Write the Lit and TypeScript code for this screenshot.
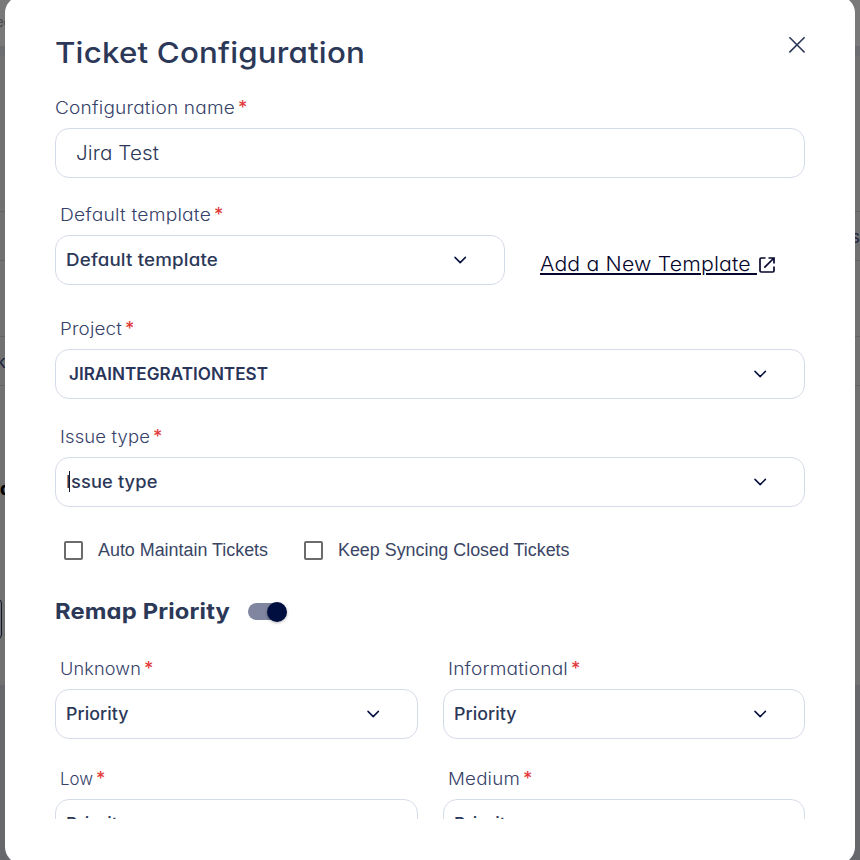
import { LitElement, html, css } from "lit";
import { customElement, property } from "lit/decorators.js";

/** A run of text widened to fill a given width, partly by stretch and partly by tracking. */
@customElement("tracked-text")
class TrackedText extends LitElement {
  @property() text = "";
  @property({ type: Number }) width = 0;

  static styles = css`
    :host { display: inline-block; white-space: pre; }
    .run { display: inline-block; transform-origin: 0 50%; }
    :host([underlined]) .run {
      text-decoration: underline; text-decoration-thickness: 2px; text-underline-offset: 2px;
    }
  `;

  render() {
    return html`<span class="run">${this.text}</span>`;
  }

  updated() {
    const run = this.renderRoot.querySelector(".run") as HTMLElement;
    run.style.letterSpacing = "0px";
    run.style.transform = "none";
    const natural = run.getBoundingClientRect().width;
    const stretch = 1 + 0.85 * (this.width / natural - 1);
    const step = (this.width / stretch - natural) / this.text.length;
    run.style.letterSpacing = `${step.toFixed(3)}px`;
    run.style.transform = `scaleX(${stretch.toFixed(4)})`;
    this.style.width = `${this.width}px`;
  }
}

@customElement("select-field")
class SelectField extends LitElement {
  @property() label = "";
  @property({ type: Number }) labelWidth = 0;
  @property() value = "";
  @property({ type: Number }) valueWidth = 0;
  @property({ type: Boolean }) strong = false;
  @property({ type: Boolean }) caret = false;

  static styles = css`
    :host { display: block; min-width: 0; }
    .label { display: flex; height: 27px; line-height: 28px; padding-left: 4.5px; font-size: 17px; font-weight: 350; color: #36426a; }
    .star { color: #e23b3b; font-weight: 500; font-size: 18px; margin-left: 3.5px; line-height: 28px; }
    .box {
      box-sizing: border-box; height: 50px; margin-top: 7px; border: 1px solid #d6dbe9; border-radius: 14px;
      display: flex; align-items: center; justify-content: space-between; padding: 0 37px 0 10px;
      font-size: 17px; font-weight: 450; color: #2c3858; background: #fff;
    }
    .strong { font-weight: 600; padding-left: 12.5px; color: #28345a; }
    .value { position: relative; line-height: 24px; }
    .caret { position: absolute; left: 3px; top: 1px; width: 1px; height: 21px; background: #111a38; }
    svg { display: block; }
  `;

  render() {
    return html`
      <div class="label"><tracked-text .text=${this.label} .width=${this.labelWidth}></tracked-text><span class="star">*</span></div>
      <div class="box ${this.strong ? "strong" : ""}">
        <span class="value"><tracked-text .text=${this.value} .width=${this.valueWidth}></tracked-text>${this.caret ? html`<i class="caret"></i>` : ""}</span>
        <svg width="14" height="10" viewBox="0 0 14 10" fill="none" stroke="#06103f" stroke-width="1.5" stroke-linecap="round" stroke-linejoin="round"><path d="M2 2.4 7.2 7.6l5.2-5.2" /></svg>
      </div>`;
  }
}

@customElement("app-root")
class AppRoot extends LitElement {
  static styles = css`
    :host {
      display: block; position: relative; width: 860px; height: 860px; overflow: hidden; background: #66686b;
      font-family: Inter, "Open Sans", sans-serif; font-feature-settings: "cv11"; color: #2c3858;
    }
    .page { display: flex; flex-direction: column; height: 860px; }
    .top { height: 46px; background: #797979; }
    .band { height: 10px; background: #6c6d70; }
    .sheet { height: 629px; background: #717171; }
    .line { position: absolute; left: 0; width: 860px; height: 1px; background: #626366; }
    .l1 { top: 211px; } .l2 { top: 260px; } .l3 { top: 336px; } .l4 { top: 385px; }
    .peek { position: absolute; font-size: 15px; line-height: 20px; color: #1b2440; }
    .p1 { left: -4px; top: 12px; font-size: 13px; color: #45484e; }
    .p2 { left: -4px; top: 352px; font-size: 18px; }
    .p3 { left: 0; top: 479px; font-size: 17px; font-weight: 800; color: #000; }
    .p4 { left: 851px; top: 227px; font-size: 17px; }
    .peekbox { position: absolute; box-sizing: border-box; left: -20px; top: 599px; width: 22px; height: 40px; border: 1px solid #10162e; border-radius: 4px; }
    .modal { position: absolute; box-sizing: border-box; left: 5px; top: -4px; width: 850px; height: 868px; border-radius: 17px; background: #fff; padding: 4px 50px 0; }
    .body { height: 819px; overflow: hidden; }
    .head { display: flex; justify-content: space-between; padding-top: 33px; height: 62px; }
    .title { font-size: 29px; font-weight: 460; line-height: 40px; margin-left: -0.5px; }
    .close { display: block; margin: 3px -1px 0 0; }
    .namelabel { display: flex; height: 26px; line-height: 26px; font-size: 17px; font-weight: 350; color: #36426a; }
    .star { color: #e23b3b; font-weight: 500; font-size: 18px; margin-left: 3px; }
    .input { box-sizing: border-box; height: 50px; margin-top: 7px; border: 1px solid #d6dbe9; border-radius: 14px; padding: 0 20px; display: flex; align-items: center; font-size: 19.5px; font-weight: 360; }
    .row { display: flex; margin-top: 23px; }
    .tpl { width: 450px; }
    .link { display: flex; align-items: flex-start; margin: 50px 0 0 35px; color: #06062c; font-size: 19.5px; font-weight: 300; line-height: 26px; }
    .link svg { margin: 5px 0 0 1px; display: block; }
    .project { margin-top: 30px; }
    .issue { margin-top: 24px; }
    .checks { display: flex; height: 24px; margin: 31px 0 0 9px; font: 18px/24px "Liberation Sans", sans-serif; color: #3a4565; }
    .check { display: flex; width: 240px; }
    .check.wide { width: 300px; }
    .tick { flex: none; box-sizing: border-box; width: 19px; height: 19px; border: 2px solid #6b6b6b; border-radius: 2px; margin: 3px 15px 0 0; }
    .remap { display: flex; height: 34px; line-height: 34px; margin-top: 32px; font-size: 22px; font-weight: 700; }
    .toggle { width: 36px; height: 17px; border-radius: 9px; background: #8085a0; margin: 9px 0 0 18px; display: flex; justify-content: flex-end; }
    .knob { flex: none; width: 20px; height: 20px; border-radius: 50%; margin: -1px -3px 0 0; background: #000f40; box-shadow: 0 1px 3px rgba(0, 0, 0, 0.3); }
    .grid { display: grid; grid-template-columns: 363px 362px; column-gap: 25px; row-gap: 26px; margin-top: 27px; }
  `;

  render() {
    const cell = (label: string, w: number) => html`
      <select-field .label=${label} .labelWidth=${w} value="Priority" .valueWidth=${62.5}></select-field>`;
    return html`
      <div class="page"><div class="top"></div><div class="band"></div><div class="sheet"></div></div>
      <i class="line l1"></i><i class="line l2"></i><i class="line l3"></i><i class="line l4"></i>
      <span class="peek p1">eg</span><span class="peek p2">k</span><span class="peek p3">a</span><span class="peek p4">s</span>
      <i class="peekbox"></i>
      <section class="modal">
        <div class="body">
          <header class="head">
            <tracked-text class="title" text="Ticket Configuration" .width=${310}></tracked-text>
            <svg class="close" width="18" height="18" viewBox="0 0 18 18" fill="none" stroke="#2c3858" stroke-width="1.6"><path d="M1.4 1.2 16.6 16.4M16.6 1.2 1.4 16.4" /></svg>
          </header>
          <div class="namelabel"><tracked-text text="Configuration name" .width=${180}></tracked-text><span class="star">*</span></div>
          <div class="input"><tracked-text text="Jira Test" .width=${83}></tracked-text></div>
          <div class="row">
            <select-field class="tpl" label="Default template" .labelWidth=${151} value="Default template" .valueWidth=${152}></select-field>
            <div class="link">
              <tracked-text underlined text="Add a New Template " .width=${217}></tracked-text>
              <svg width="18" height="18" viewBox="0 0 18 18" fill="none" stroke="#06062c" stroke-width="1.7"><path d="M7.5 2H3.2Q2 2 2 3.2v11.6Q2 16 3.2 16h11.6q1.2 0 1.2-1.2V10.5M10.5 2H16v5.5M16 2 6.3 11.7" /></svg>
            </div>
          </div>
          <select-field class="project" label="Project" .labelWidth=${62} value="JIRAINTEGRATIONTEST" .valueWidth=${199} strong></select-field>
          <select-field class="issue" label="Issue type" .labelWidth=${90} value="Issue type" .valueWidth=${91.5} caret></select-field>
          <div class="checks">
            <div class="check"><i class="tick"></i><tracked-text text="Auto Maintain Tickets" .width=${170}></tracked-text></div>
            <div class="check wide"><i class="tick"></i><tracked-text text="Keep Syncing Closed Tickets" .width=${231.5}></tracked-text></div>
          </div>
          <div class="remap"><tracked-text text="Remap Priority" .width=${175}></tracked-text><span class="toggle"><i class="knob"></i></span></div>
          <div class="grid">
            ${cell("Unknown", 81)}${cell("Informational", 120)}${cell("Low", 33)}${cell("Medium", 72)}
          </div>
        </div>
      </section>`;
  }
}
